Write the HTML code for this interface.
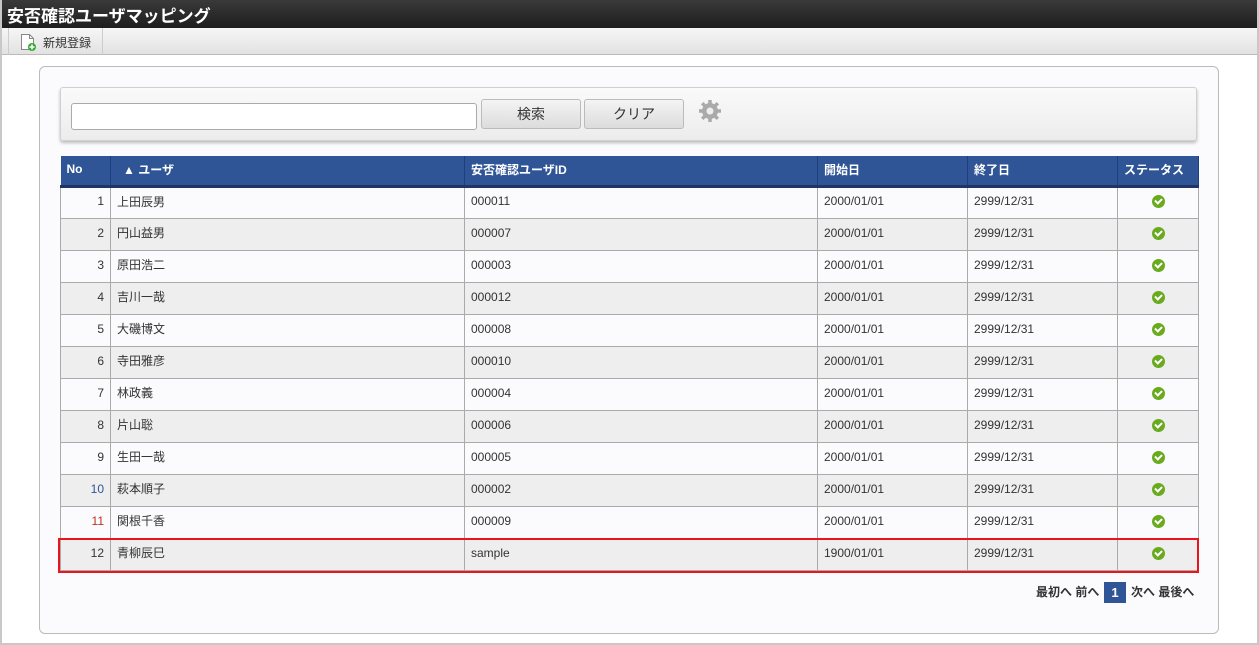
<!DOCTYPE html>
<html><head><meta charset="utf-8"><style>
*{box-sizing:border-box;margin:0;padding:0}
body{width:1259px;height:645px;background:#fff;font-family:"Liberation Sans","Noto Sans CJK JP",sans-serif;font-size:12px;color:#333;position:relative;overflow:hidden}
.frame{position:absolute;left:0;top:0;width:1259px;height:645px;border-left:2px solid #c8c8c8;border-right:2px solid #c8c8c8;border-bottom:2px solid #c8c8c8;pointer-events:none}
.title{position:absolute;left:0;top:0;width:1259px;height:28px;background:linear-gradient(#3a3a3a,#1e1e1e);color:#fff;font-weight:bold;font-size:17px;padding:2px 7px}
.tool{position:absolute;left:0;top:28px;width:1259px;height:27px;background:linear-gradient(#f6f6f6,#e2e2e2);border-bottom:1px solid #bbb}
.tb{position:absolute;left:8px;top:0;width:95px;height:27px;border-left:1px solid #ccc;border-right:1px solid #ccc;font-size:12px;padding:6px 0 0 34px}
.panel{position:absolute;left:39px;top:66px;width:1180px;height:568px;border:1px solid #bbb;border-radius:6px;background:#fbfbfd}
.search{position:absolute;left:60px;top:87px;width:1137px;height:54px;border:1px solid #d0d0d0;border-radius:3px;background:linear-gradient(#fafafa,#ececec);box-shadow:0 2px 3px #bbb}
.inp{position:absolute;left:71px;top:103px;width:406px;height:27px;border:1px solid #aaa;border-radius:3px;background:#fff}
.btn{position:absolute;top:99px;width:100px;height:30px;border:1px solid #bbb;border-radius:3px;background:linear-gradient(#f4f4f4,#dcdcdc);text-align:center;line-height:28px;font-size:14px;color:#333}
table{position:absolute;left:60px;top:156px;width:1138px;border-collapse:collapse;table-layout:fixed}
th{background:#2f5597;color:#fff;text-align:left;font-size:12px;height:30px;padding:0 6px 2px;border-right:1px solid #1f3f7a;border-bottom:3px solid #1f3566}
td{height:32px;border:1px solid #aaa;padding:0 6px 3px;font-size:12px}
tr:nth-child(odd) td{background:#eee}
td.n{text-align:right}
.ok{display:inline-block;width:13px;height:13px;border-radius:50%;background:#6aaa1e;position:relative;vertical-align:middle}
.ok:after{content:"";position:absolute;left:3px;top:3px;width:5px;height:3px;border-left:2px solid #fff;border-bottom:2px solid #fff;transform:rotate(-45deg)}
.hl{position:absolute;left:58px;top:538px;width:1141px;height:35px;border:2px solid #e8141e}
.pg{position:absolute;top:583px;font-weight:bold;font-size:12px;color:#333}
</style></head><body>
<div class="title">安否確認ユーザマッピング</div>
<div class="tool"><div class="tb"><svg style="position:absolute;left:11px;top:5px" width="16" height="18"><path d="M1.5 1.5h8l4 4v11h-12z" fill="#fff" stroke="#888"/><path d="M9.5 1.5v4h4" fill="none" stroke="#888"/><circle cx="12" cy="14" r="4" fill="#3a3"/><path d="M12 11.5v5M9.5 14h5" stroke="#fff" stroke-width="1.6"/></svg>新規登録</div></div>
<div class="panel"></div>
<div class="search"></div>
<div class="inp"></div>
<div class="btn" style="left:481px">検索</div>
<div class="btn" style="left:584px">クリア</div>
<svg style="position:absolute;left:698px;top:99px" width="24" height="24" viewBox="0 0 24 24"><g fill="#aaa"><circle cx="12" cy="12" r="8"/><g stroke="#aaa" stroke-width="3.5"><path d="M12 1v22M1 12h22M4.2 4.2l15.6 15.6M19.8 4.2L4.2 19.8"/></g></g><circle cx="12" cy="12" r="3.5" fill="#eee"/></svg>
<table>
<colgroup><col style="width:50px"><col style="width:354px"><col style="width:353px"><col style="width:150px"><col style="width:150px"><col style="width:81px"></colgroup>
<tr><th>No</th><th style="padding-left:12px">▲ ユーザ</th><th>安否確認ユーザID</th><th>開始日</th><th>終了日</th><th>ステータス</th></tr>
<tr><td class="n">1</td><td>上田辰男</td><td>000011</td><td>2000/01/01</td><td>2999/12/31</td><td style="text-align:center"><span class="ok"></span></td></tr>
<tr><td class="n">2</td><td>円山益男</td><td>000007</td><td>2000/01/01</td><td>2999/12/31</td><td style="text-align:center"><span class="ok"></span></td></tr>
<tr><td class="n">3</td><td>原田浩二</td><td>000003</td><td>2000/01/01</td><td>2999/12/31</td><td style="text-align:center"><span class="ok"></span></td></tr>
<tr><td class="n">4</td><td>吉川一哉</td><td>000012</td><td>2000/01/01</td><td>2999/12/31</td><td style="text-align:center"><span class="ok"></span></td></tr>
<tr><td class="n">5</td><td>大磯博文</td><td>000008</td><td>2000/01/01</td><td>2999/12/31</td><td style="text-align:center"><span class="ok"></span></td></tr>
<tr><td class="n">6</td><td>寺田雅彦</td><td>000010</td><td>2000/01/01</td><td>2999/12/31</td><td style="text-align:center"><span class="ok"></span></td></tr>
<tr><td class="n">7</td><td>林政義</td><td>000004</td><td>2000/01/01</td><td>2999/12/31</td><td style="text-align:center"><span class="ok"></span></td></tr>
<tr><td class="n">8</td><td>片山聡</td><td>000006</td><td>2000/01/01</td><td>2999/12/31</td><td style="text-align:center"><span class="ok"></span></td></tr>
<tr><td class="n">9</td><td>生田一哉</td><td>000005</td><td>2000/01/01</td><td>2999/12/31</td><td style="text-align:center"><span class="ok"></span></td></tr>
<tr><td class="n" style="color:#2f5597">10</td><td>萩本順子</td><td>000002</td><td>2000/01/01</td><td>2999/12/31</td><td style="text-align:center"><span class="ok"></span></td></tr>
<tr><td class="n" style="color:#c03020">11</td><td>関根千香</td><td>000009</td><td>2000/01/01</td><td>2999/12/31</td><td style="text-align:center"><span class="ok"></span></td></tr>
<tr><td class="n">12</td><td>青柳辰巳</td><td>sample</td><td>1900/01/01</td><td>2999/12/31</td><td style="text-align:center"><span class="ok"></span></td></tr>
</table>
<div class="hl"></div>
<div class="pg" style="left:1036px">最初へ 前へ</div>
<div style="position:absolute;left:1104px;top:582px;width:22px;height:21px;background:#2f5597;color:#fff;font-weight:bold;text-align:center;line-height:21px;font-size:13px">1</div>
<div class="pg" style="left:1131px">次へ 最後へ</div>
<div class="frame"></div>
</body></html>
